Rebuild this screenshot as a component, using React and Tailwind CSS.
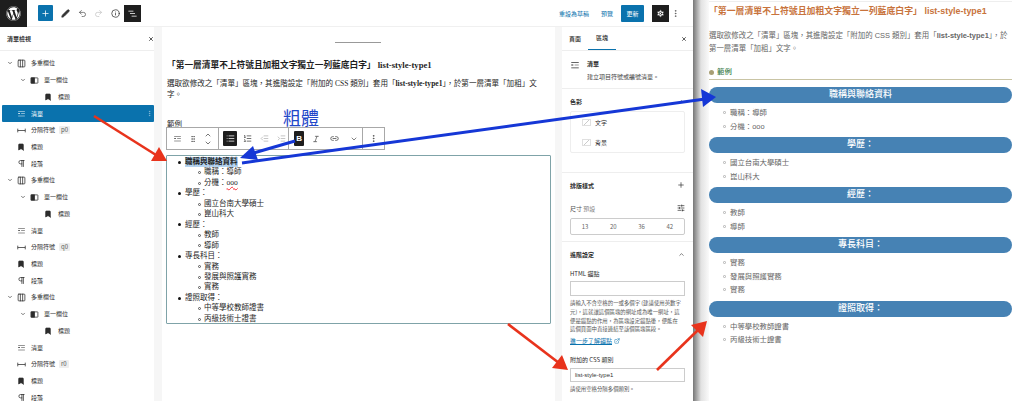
import React from "react";
import {
  Plus,
  Pen,
  Undo2,
  Redo2,
  Info,
  X,
  ChevronDown,
  ChevronUp,
  MoreVertical,
  Settings,
  Columns3,
  Bookmark,
  Pilcrow,
  List,
  ListOrdered,
  IndentDecrease,
  IndentIncrease,
  Italic,
  Link2,
  GripVertical,
  SlidersHorizontal,
  ExternalLink,
} from "lucide-react";
import { FaWordpress } from "react-icons/fa";

// WP "list" block icon
const ListBlockIcon = ({ className }) => (
  <svg viewBox="0 0 24 24" className={className} fill="currentColor">
    <path d="M3 5h18v1.6H3zM3 18h18v1.6H3zM11 11.2h10v1.6H11zM3 11h5v2H3z" />
  </svg>
);

// WP "list view" toggle icon
const ListViewIcon = ({ className }) => (
  <svg viewBox="0 0 24 24" className={className} fill="currentColor">
    <path d="M3 6h11v1.5H3V6Zm3.5 5.5h11V13h-11v-1.5ZM21 17H10v1.5h11V17Z" />
  </svg>
);

const ColumnIcon = ({ className }) => (
  <svg viewBox="0 0 24 24" className={className} fill="none" stroke="currentColor" strokeWidth="2">
    <rect x="3" y="5" width="18" height="14" rx="1" />
    <rect x="3" y="5" width="9" height="14" fill="currentColor" />
  </svg>
);

const SeparatorIcon = ({ className }) => (
  <svg viewBox="0 0 24 24" className={className} fill="none" stroke="currentColor" strokeWidth="2">
    <path d="M2 7v10M22 7v10M2 12h20" />
  </svg>
);

const ICONS = {
  columns: Columns3,
  column: ColumnIcon,
  list: ListBlockIcon,
  sep: SeparatorIcon,
  para: Pilcrow,
};

const outline = [
  { level: 0, icon: "columns", label: "多重欄位", open: true },
  { level: 1, icon: "column", label: "單一欄位", open: true },
  { level: 2, icon: "heading", label: "標題" },
  { level: 0, icon: "list", label: "清單", selected: true },
  { level: 0, icon: "sep", label: "分隔符號", tag: "p0" },
  { level: 0, icon: "heading", label: "標題" },
  { level: 0, icon: "para", label: "段落" },
  { level: 0, icon: "columns", label: "多重欄位", open: true },
  { level: 1, icon: "column", label: "單一欄位", open: true },
  { level: 2, icon: "heading", label: "標題" },
  { level: 0, icon: "list", label: "清單" },
  { level: 0, icon: "sep", label: "分隔符號", tag: "q0" },
  { level: 0, icon: "heading", label: "標題" },
  { level: 0, icon: "para", label: "段落" },
  { level: 0, icon: "columns", label: "多重欄位", open: true },
  { level: 1, icon: "column", label: "單一欄位", open: true },
  { level: 2, icon: "heading", label: "標題" },
  { level: 0, icon: "list", label: "清單" },
  { level: 0, icon: "sep", label: "分隔符號", tag: "r0" },
  { level: 0, icon: "heading", label: "標題" },
  { level: 0, icon: "para", label: "段落" },
];

const resume = [
  { title: "職稱與聯絡資料", items: ["職稱：導師", "分機：ooo"] },
  { title: "學歷：", items: ["國立台南大學碩士", "崑山科大"] },
  { title: "經歷：", items: ["教師", "導師"] },
  { title: "專長科目：", items: ["實務", "發展與照護實務", "實務"] },
  { title: "證照取得：", items: ["中等學校教師證書", "丙級技術士證書"] },
];

const OutlineRow = ({ row }) => {
  const Icon = ICONS[row.icon];
  const indent = ["pl-[4px]", "pl-[17px]", "pl-[31px]"][row.level];
  return (
    <div
      className={`flex items-center h-[16.72px] ${indent} ${
        row.selected ? "bg-[#0a72ad] text-white rounded-[1px]" : "text-[#2c2c2c]"
      }`}
    >
      <span className="w-[10px] flex justify-start">
        {row.open && <ChevronDown className="w-[6px] h-[6px] ml-[1px]" strokeWidth={2.5} />}
      </span>
      <span className="w-[10px] flex justify-center">
        {row.icon === "heading" ? (
          <Bookmark className="w-[8px] h-[8px]" fill="currentColor" />
        ) : (
          <Icon className="w-[9px] h-[9px]" />
        )}
      </span>
      <span className="ml-[5px] text-[6px] leading-none">{row.label}</span>
      {row.tag && (
        <span className="ml-[4px] bg-[#eeeeee] px-[2px] py-[1px] rounded-[1px] text-[6px] leading-none text-[#555]">
          {row.tag}
        </span>
      )}
      {row.selected && <MoreVertical className="ml-auto mr-[1px] w-[7px] h-[7px] opacity-60" />}
    </div>
  );
};

const ListPanel = () => (
  <aside className="w-[162px] shrink-0 flex bg-white">
    <div className="w-[154px] flex flex-col overflow-hidden">
      <div className="h-[24px] shrink-0 flex items-center justify-between pl-[7px] border-b border-[#eeeeee]">
        <span className="text-[6px] font-semibold text-[#333]">清單檢視</span>
        <X className="w-[6px] h-[6px] text-[#222]" strokeWidth={3} />
      </div>
      <div className="pt-[4px] pl-[2px]">
        {outline.map((row, i) => (
          <OutlineRow key={i} row={row} />
        ))}
      </div>
    </div>
    <div className="w-[8px] bg-[#f6f6f6]" />
  </aside>
);

const ToolBtn = ({ children, className = "" }) => (
  <span className={`flex items-center justify-center text-[#444] ${className}`}>{children}</span>
);

const BlockToolbar = () => (
  <div className="relative h-[23px] w-[219px] flex border border-[#a8a8a8] bg-white">
    <div className="w-[52px] flex items-center justify-around px-[3px] border-r border-[#a8a8a8]">
      <ListBlockIcon className="w-[9px] h-[9px] text-[#333]" />
      <GripVertical className="w-[8px] h-[8px] text-[#555]" />
      <div className="flex flex-col">
        <ChevronUp className="w-[8px] h-[8px] text-[#333]" />
        <ChevronDown className="w-[8px] h-[8px] text-[#333]" />
      </div>
    </div>
    <div className="w-[70px] flex items-center gap-[3px] pl-[4px] border-r border-[#a8a8a8]">
      <ToolBtn className="w-[15px] h-[15px] bg-[#1e1e1e] rounded-[1px]">
        <List className="w-[9px] h-[9px] text-white" />
      </ToolBtn>
      <ToolBtn className="w-[15px]">
        <ListOrdered className="w-[9px] h-[9px]" />
      </ToolBtn>
      <ToolBtn className="w-[15px] opacity-40">
        <IndentDecrease className="w-[9px] h-[9px]" />
      </ToolBtn>
      <ToolBtn className="w-[15px] opacity-40">
        <IndentIncrease className="w-[9px] h-[9px]" />
      </ToolBtn>
    </div>
    <div className="w-[74px] flex items-center gap-[3px] pl-[5px] border-r border-[#a8a8a8]">
      <span className="w-[11px] h-[15px] bg-[#1e1e1e] rounded-[1px] text-white text-[8px] font-bold flex items-center justify-center font-['Liberation_Sans',sans-serif]">
        B
      </span>
      <ToolBtn className="w-[17px]">
        <Italic className="w-[8px] h-[8px]" />
      </ToolBtn>
      <ToolBtn className="w-[17px]">
        <Link2 className="w-[9px] h-[9px]" />
      </ToolBtn>
      <ToolBtn className="w-[17px]">
        <ChevronDown className="w-[8px] h-[8px]" />
      </ToolBtn>
    </div>
    <ToolBtn className="flex-1">
      <MoreVertical className="w-[9px] h-[9px]" />
    </ToolBtn>
  </div>
);

const Canvas = () => (
  <main className="relative w-[393px] shrink-0 bg-white pt-[15px] font-['Liberation_Serif','Noto_Sans_CJK_TC',serif] text-[#1e1e1e]">
    <div className="ml-[173px] w-[46px] h-px bg-[#999]" />
    <h1 className="mt-[16px] ml-[5px] text-[8.7px] leading-[12px] font-bold whitespace-nowrap">
      「第一層清單不上符號且加粗文字獨立一列藍底白字」 list-style-type1
    </h1>
    <p className="mt-[7px] ml-[5px] mr-[18px] text-[7.55px] leading-[11px]">
      選取欲修改之「清單」區塊，其進階設定「附加的 CSS 類別」套用「<b>list-style-type1</b>」，於第一層清單「加粗」文字。
    </p>
    <span className="absolute left-[121px] top-[78px] text-[18px] leading-[24px] text-[#1f47c9] font-['Noto_Sans_CJK_TC',sans-serif]">
      粗體
    </span>
    <div className="mt-[20px] ml-[5px] h-[7px] overflow-hidden text-[7.5px] leading-[10px]">範例</div>
    <div className="ml-[4px]">
      <BlockToolbar />
    </div>
    <div className="mt-[5px] ml-[4px] mr-[4px] h-[169px] border border-[#7fa3a8] rounded-[1px] pt-[1px] text-[7.5px] leading-[10.45px] overflow-hidden">
      <ul>
        {resume.map((group, i) => (
          <li key={group.title}>
            <div className="flex items-center gap-[4px] pl-[11px]">
              <span className="w-[3px] h-[3px] rounded-full bg-[#111]" />
              <span className={i === 0 ? "font-bold bg-[#b4d3f0]" : ""}>{group.title}</span>
            </div>
            <ul>
              {group.items.map((item, j) => (
                <li key={j} className="flex items-center gap-[3px] pl-[31px]">
                  <span className="w-[3px] h-[3px] rounded-full border-[0.5px] border-[#555]" />
                  {item === "分機：ooo" ? (
                    <span>
                      分機：<span className="underline decoration-wavy decoration-red-500">ooo</span>
                    </span>
                  ) : (
                    item
                  )}
                </li>
              ))}
            </ul>
          </li>
        ))}
      </ul>
    </div>
  </main>
);

const Section = ({ children, className = "" }) => (
  <div className={`px-[8px] border-b border-[#eeeeee] ${className}`}>{children}</div>
);

const Sidebar = () => (
  <aside className="w-[138px] shrink-0 flex text-[#2c2c2c] text-[6px]">
    <div className="w-[7px] bg-[#f6f6f6]" />
    <div className="flex-1 bg-white overflow-hidden">
      <div className="h-[24px] flex items-end pl-[7px] border-b border-[#eeeeee]">
        <span className="pb-[7px] font-medium">頁面</span>
        <span className="ml-[7px] px-[8px] pb-[7px] font-medium border-b border-[#0a72ad]">區塊</span>
        <X className="ml-auto mr-[6px] mb-[8px] w-[6px] h-[6px]" strokeWidth={3} />
      </div>
      <Section className="h-[38px] flex pt-[9px]">
        <ListBlockIcon className="w-[10px] h-[10px] text-[#333]" />
        <div className="ml-[7px]">
          <div className="font-semibold leading-[8px]">清單</div>
          <div className="mt-[5px] leading-[7px] text-[#444]">建立項目符號或編號清單。</div>
        </div>
      </Section>
      <Section className="h-[84px] pt-[8px]">
        <div className="flex items-center justify-between h-[8px] font-semibold">
          色彩
          <ChevronUp className="w-[7px] h-[7px]" />
        </div>
        <div className="mt-[6px] h-[42px] border border-[#eeeeee] rounded-[2px] px-[11px] flex flex-col justify-around">
          <div className="flex items-center gap-[4px]">
            <span className="w-[9px] h-[7px] border border-[#e0e0e0] bg-[linear-gradient(135deg,#fff_47%,#ccc_50%,#fff_53%)]" />
            文字
          </div>
          <div className="flex items-center gap-[4px]">
            <span className="w-[9px] h-[7px] border border-[#e0e0e0] bg-[linear-gradient(135deg,#fff_47%,#ccc_50%,#fff_53%)]" />
            背景
          </div>
        </div>
      </Section>
      <Section className="h-[69px] pt-[8px]">
        <div className="flex items-center justify-between h-[8px] font-semibold">
          排版樣式
          <Plus className="w-[8px] h-[8px]" />
        </div>
        <div className="mt-[15px] flex items-center justify-between h-[8px] text-[#555]">
          <span>
            尺寸 <span className="text-[#888]">預設</span>
          </span>
          <SlidersHorizontal className="w-[8px] h-[8px] text-[#222]" />
        </div>
        <div className="mt-[6px] h-[17px] border border-[#cccccc] rounded-[2px] flex items-center justify-around text-[#666]">
          <span>13</span>
          <span>20</span>
          <span>36</span>
          <span>42</span>
        </div>
      </Section>
      <div className="px-[8px] pt-[8px]">
        <div className="flex items-center justify-between h-[8px] font-semibold">
          進階設定
          <ChevronUp className="w-[7px] h-[7px]" />
        </div>
        <div className="mt-[12px] leading-[8px]">HTML 錨點</div>
        <div className="mt-[3px] h-[15px] border border-[#cccccc]" />
        <p className="mt-[3px] text-[5.4px] leading-[8.8px] text-[#555] whitespace-nowrap">
          請輸入不含空格的一或多個字 (建議使用英數字
          <br />
          元)，這就讓這個區塊的網址成為唯一網址，這
          <br />
          便是錨點的作用，為區塊設定錨點後，便能在
          <br />
          這個頁面中直接連結至該個區塊區段。
        </p>
        <div className="mt-[3px] flex items-center gap-[2px] text-[#0a72ad] leading-[8px]">
          <span className="underline">進一步了解錨點</span>
          <ExternalLink className="w-[6px] h-[6px]" />
        </div>
        <div className="mt-[11px] leading-[8px]">附加的 CSS 類別</div>
        <div className="mt-[4px] h-[14px] border border-[#cccccc] flex items-center pl-[4px] font-['Liberation_Sans',sans-serif] text-[#333]">
          list-style-type1
        </div>
        <div className="mt-[4px] text-[5.4px] leading-[7px] text-[#555]">請使用空格分隔多個類別。</div>
      </div>
    </div>
  </aside>
);

const TopBar = () => (
  <header className="h-[27px] shrink-0 flex items-center bg-white border-b border-[#f0f0f0] text-[#333]">
    <div className="w-[27px] h-[27px] bg-[#1e1e1e] flex items-center justify-center">
      <FaWordpress className="w-[15px] h-[15px] text-white" />
    </div>
    <div className="ml-[11px] w-[15px] h-[16px] bg-[#0a72ad] rounded-[1px] flex items-center justify-center">
      <Plus className="w-[9px] h-[9px] text-white" />
    </div>
    <Pen className="ml-[8px] w-[9px] h-[9px]" fill="currentColor" />
    <Undo2 className="ml-[8px] w-[9px] h-[9px] text-[#555]" />
    <Redo2 className="ml-[7px] w-[9px] h-[9px] text-[#c4c4c4]" />
    <Info className="ml-[8px] w-[9px] h-[9px]" />
    <div className="ml-[4px] w-[17px] h-[17px] bg-[#1e1e1e] flex items-center justify-center">
      <ListViewIcon className="w-[11px] h-[11px] text-white" />
    </div>
    <div className="ml-auto flex items-center text-[6px] text-[#0a72ad]">
      <span>重設為草稿</span>
      <span className="ml-[12px]">預覽</span>
      <span className="ml-[8px] w-[23px] h-[17px] bg-[#0a72ad] text-white flex items-center justify-center rounded-[1px]">
        更新
      </span>
      <span className="ml-[8px] w-[17px] h-[17px] bg-[#1e1e1e] flex items-center justify-center">
        <Settings className="w-[9px] h-[9px] text-white" fill="currentColor" stroke="#1e1e1e" />
      </span>
      <MoreVertical className="ml-[2px] mr-[13px] w-[9px] h-[9px] text-[#555]" />
    </div>
  </header>
);

const Preview = () => (
  <section className="flex-1 flex bg-white font-['Liberation_Sans','Noto_Sans_CJK_TC',sans-serif]">
    <div className="w-[16px] shrink-0 bg-gradient-to-r from-[#777] via-[#e2e2e2] to-[#fafafa]" />
    <div className="w-[303px] shrink-0">
      <div className="h-[2px] border-b border-[#eeeeee]" />
      <h2 className="mt-[3px] text-[8.9px] leading-[12px] font-bold text-[#c8733c] whitespace-nowrap">
        「第一層清單不上符號且加粗文字獨立一列藍底白字」 list-style-type1
      </h2>
      <p className="mt-[12px] text-[7.45px] leading-[13px] text-[#666]">
        選取欲修改之「清單」區塊，其進階設定「附加的 CSS 類別」套用「<b>list-style-type1</b>」，於第一層清單「加粗」文字。
      </p>
      <div className="mt-[12px] h-[10px] flex items-center border-b border-[#c9c4a4] pb-[2px] box-content">
        <span className="w-[5px] h-[5px] rounded-full bg-[#a89f75]" />
        <span className="ml-[3px] text-[7.4px] font-medium text-[#3f7f4f]">範例</span>
      </div>
      <div className="mt-[7px]">
        {resume.map((group) => (
          <div key={group.title}>
            <div className="h-[16px] rounded-full bg-[#4682b4] text-white text-[9px] font-medium flex items-center justify-center">
              {group.title}
            </div>
            <ul className="pt-[3px] pb-[4px] pl-[14px] text-[7.4px] leading-[13.5px] text-[#666]">
              {group.items.map((item, j) => (
                <li key={j} className="flex items-center gap-[4px]">
                  <span className="w-[3px] h-[3px] border border-[#c4c4c4] rounded-[1px]" />
                  {item}
                </li>
              ))}
            </ul>
          </div>
        ))}
      </div>
    </div>
  </section>
);

// Arrows drawn over the screenshot
const Arrows = () => (
  <svg className="absolute inset-0 w-[1024px] h-[401px] pointer-events-none" viewBox="0 0 1024 401">
    <g stroke="#e8331c" strokeWidth="2.6" fill="#e8331c">
      <line x1="94" y1="116" x2="156" y2="155" />
      <polygon points="167,161 151,161 159,147" stroke="none" />
      <line x1="508" y1="324" x2="559" y2="363" />
      <polygon points="568,370 552,368 562,355" stroke="none" />
      <line x1="657" y1="370" x2="698" y2="330" />
      <polygon points="707,321 703,337 691,325" stroke="none" />
    </g>
    <g stroke="#1537d6" strokeWidth="3" fill="#1537d6">
      <line x1="295" y1="141" x2="250" y2="154" />
      <polygon points="240,158 253,146 258,160" stroke="none" />
      <line x1="242" y1="163" x2="705" y2="99" />
      <polygon points="716,97 703,107 701,89" stroke="none" />
    </g>
  </svg>
);

export default function App() {
  return (
    <div className="relative w-[1024px] h-[401px] overflow-hidden flex bg-white font-['Noto_Sans_CJK_TC','Liberation_Sans',sans-serif]">
      <div className="w-[693px] shrink-0 flex flex-col overflow-hidden">
        <TopBar />
        <div className="flex flex-1 min-h-0">
          <ListPanel />
          <Canvas />
          <Sidebar />
        </div>
      </div>
      <Preview />
      <Arrows />
    </div>
  );
}
